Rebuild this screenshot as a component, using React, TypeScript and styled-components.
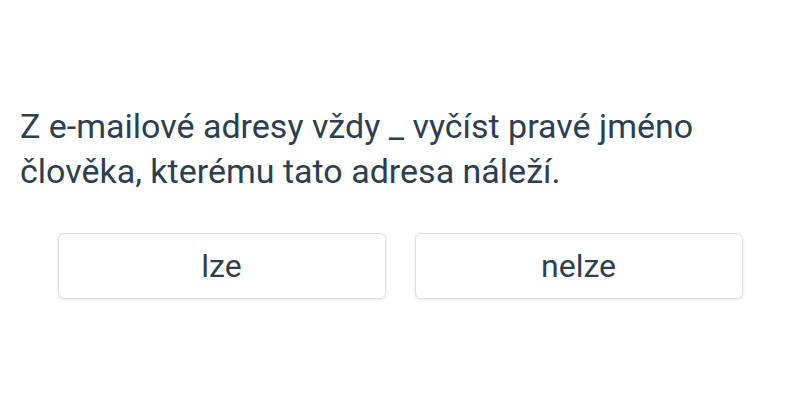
import React from "react";
import styled, { createGlobalStyle } from "styled-components";

const Global = createGlobalStyle`
  html, body { margin: 0; padding: 0; background: #fff; }
  body { font-family: Roboto, "Noto Sans", sans-serif; color: #2c3e50; }
`;

const Page = styled.div`
  width: 800px;
  height: 400px;
  box-sizing: border-box;
  padding: 104px 20px 0 20px;
  display: flex;
  flex-direction: column;
`;

const Question = styled.p`
  margin: 0;
  font-size: 34px;
  line-height: 45px;
  font-weight: 400;
`;

const Options = styled.div`
  display: grid;
  grid-template-columns: 328px 328px;
  justify-content: center;
  gap: 29px;
  margin-top: 39px;
`;

const Option = styled.button`
  height: 66px;
  box-sizing: border-box;
  background: #fff;
  border: 1px solid #e0e0e0;
  border-radius: 6px;
  box-shadow: 0 1px 3px rgba(0, 0, 0, 0.1);
  font-family: Roboto, "Noto Sans", sans-serif;
  font-size: 32px;
  color: #2c3e50;
  cursor: pointer;
`;

export default function App() {
  return (
    <>
      <Global />
      <Page>
        <Question>
          Z e-mailové adresy vždy _ vyčíst pravé jméno člověka, kterému tato adresa náleží.
        </Question>
        <Options>
          <Option>lze</Option>
          <Option>nelze</Option>
        </Options>
      </Page>
    </>
  );
}
